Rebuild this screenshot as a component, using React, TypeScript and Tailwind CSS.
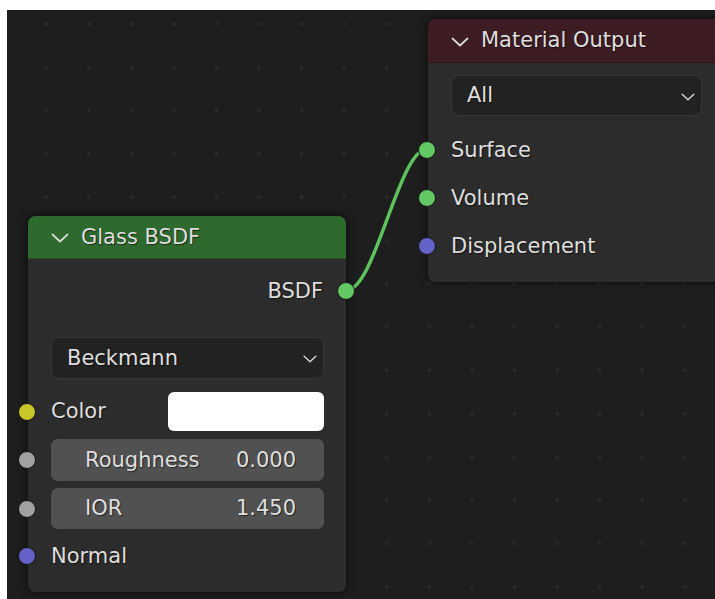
import type { ReactNode } from "react";

const TEXT = "text-[21px] text-[#dedede] leading-none [text-shadow:1px_1px_1px_rgba(0,0,0,0.55)]";
const DOT = "absolute top-1/2 -translate-y-1/2 w-[18px] h-[18px] rounded-full border-[1.5px] border-[#141414]";

function Chevron({ className }: { className: string }) {
  return (
    <svg viewBox="0 0 18 10" className={className} fill="none" stroke="currentColor" strokeWidth="1.8" strokeLinecap="round" strokeLinejoin="round">
      <path d="M1.5 1.5 L9 8.5 L16.5 1.5" />
    </svg>
  );
}

function Dropdown({ label, className }: { label: string; className: string }) {
  return (
    <div className={`flex items-center justify-between rounded-[8px] bg-[#222222] border border-[#363636] pl-[15px] pr-[6px] ${className}`}>
      <span className={TEXT}>{label}</span>
      <Chevron className="w-[14px] h-[8px] text-[#d8d8d8] mt-[2px]" />
    </div>
  );
}

function Header({ title, color, h }: { title: string; color: string; h: string }) {
  return (
    <div className={`flex items-center gap-[12px] pl-[23px] ${h} ${color} border-b border-black/25`}>
      <Chevron className="w-[18px] h-[10px] text-[#d8d8d8] mt-[2px]" />
      <span className={TEXT}>{title}</span>
    </div>
  );
}

function Row({ children, className = "" }: { children: ReactNode; className?: string }) {
  return <div className={`relative flex items-center ${className}`}>{children}</div>;
}

function NumField({ label, value, className }: { label: string; value: string; className: string }) {
  return (
    <div className={`flex items-center justify-between rounded-[7px] bg-[#515151] pl-[34px] pr-[28px] ${className}`}>
      <span className={TEXT}>{label}</span>
      <span className={TEXT}>{value}</span>
    </div>
  );
}

function GlassNode() {
  return (
    <div className="absolute left-[20px] top-[205px] w-[320px] rounded-[8px] bg-[#2c2c2c] border border-[#151515] shadow-[0_0_10px_rgba(0,0,0,0.55)]">
      <div className="rounded-t-[8px] overflow-hidden">
        <Header title="Glass BSDF" color="bg-[#2e692e]" h="h-[43px]" />
      </div>
      <div className="flex flex-col pt-[8px] pb-[12px] pl-[23px] pr-[22px]">
        <Row className="h-[48px] justify-end pr-[1px]">
          <span className={TEXT}>BSDF</span>
          <span className={`${DOT} -right-[31px] bg-[#63c763]`} />
        </Row>
        <Dropdown label="Beckmann" className="mt-[22px] h-[42px]" />
        <Row className="mt-[13px] h-[39px] justify-between">
          <span className={`${DOT} -left-[33px] bg-[#c7c729]`} />
          <span className={TEXT}>Color</span>
          <div className="w-[156px] h-[39px] rounded-[6px] bg-white" />
        </Row>
        <Row className="mt-[8px]">
          <span className={`${DOT} -left-[33px] bg-[#a1a1a1]`} />
          <NumField label="Roughness" value="0.000" className="flex-1 h-[42px]" />
        </Row>
        <Row className="mt-[7px]">
          <span className={`${DOT} -left-[33px] bg-[#a1a1a1]`} />
          <NumField label="IOR" value="1.450" className="flex-1 h-[41px]" />
        </Row>
        <Row className="mt-[3px] h-[48px]">
          <span className={`${DOT} -left-[33px] bg-[#6363c7]`} />
          <span className={TEXT}>Normal</span>
        </Row>
      </div>
    </div>
  );
}

function OutputNode() {
  const inputs = [
    { name: "Surface", color: "bg-[#63c763]" },
    { name: "Volume", color: "bg-[#63c763]" },
    { name: "Displacement", color: "bg-[#6363c7]" },
  ];
  return (
    <div className="absolute left-[420px] top-[8px] w-[300px] rounded-[8px] bg-[#2c2c2c] border border-[#151515] shadow-[0_0_10px_rgba(0,0,0,0.55)]">
      <div className="rounded-t-[8px] overflow-hidden">
        <Header title="Material Output" color="bg-[#3d1c23]" h="h-[44px]" />
      </div>
      <div className="flex flex-col pt-[12px] pb-[12px] pl-[23px] pr-[24px]">
        <Dropdown label="All" className="h-[41px]" />
        <div className="mt-[10px] flex flex-col">
          {inputs.map((s) => (
            <Row key={s.name} className="h-[48px]">
              <span className={`${DOT} -left-[33px] ${s.color}`} />
              <span className={TEXT}>{s.name}</span>
            </Row>
          ))}
        </div>
      </div>
    </div>
  );
}

export default function App() {
  return (
    <div className="w-[715px] h-[599px] bg-white pt-[10px] pl-[7px] flex font-['DejaVu_Sans',sans-serif]">
      <div className="relative flex-1 overflow-hidden bg-[#1e1e1e] bg-[radial-gradient(circle,#2b2b2b_1.5px,transparent_2.2px)] bg-[length:42.6px_43.3px] bg-[position:17.7px_35.65px]">
        {/* noodle between BSDF output and Surface input */}
        <svg className="absolute inset-0 w-full h-full pointer-events-none" viewBox="0 0 708 589">
          <path d="M340 280 C 368 280, 392 139, 420 139" fill="none" stroke="#5ec25e" strokeWidth="3.5" strokeLinecap="round" />
        </svg>
        <GlassNode />
        <OutputNode />
      </div>
    </div>
  );
}
